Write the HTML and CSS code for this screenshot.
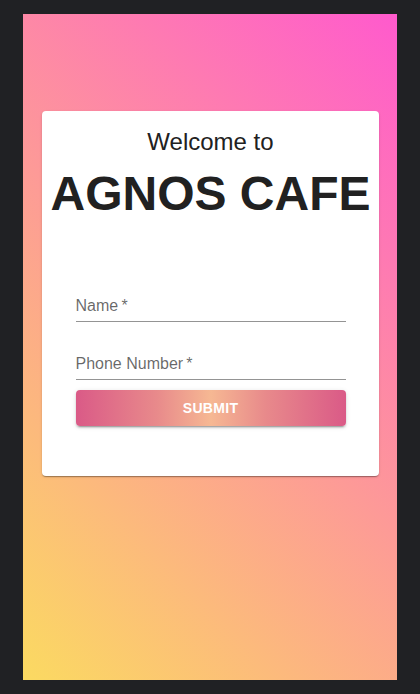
FILE: index.html
```html
<!DOCTYPE html>
<html lang="en">
<head>
<meta charset="utf-8">
<title>Agnos Cafe</title>
<link rel="stylesheet" href="styles.css">
</head>
<body>
  <div class="screen">
    <div class="card">
      <div class="welcome">Welcome to</div>
      <h1 class="brand">AGNOS CAFE</h1>
      <form class="form">
        <div class="field field-first">
          <span class="label">Name&#8201;*</span>
        </div>
        <div class="field">
          <span class="label">Phone Number&#8201;*</span>
        </div>
        <button type="button" class="submit">SUBMIT</button>
      </form>
    </div>
  </div>
</body>
</html>
```

FILE: styles.css
```css
html, body {
  margin: 0;
  padding: 0;
}
body {
  background: #202124;
  font-family: "Liberation Sans", Arial, sans-serif;
  padding-top: 14px;
  padding-bottom: 14px;
}
.screen {
  width: 374px;
  height: 666px;
  margin: 0 auto;
  box-sizing: border-box;
  padding-top: 97px;
  padding-left: 19px;
  background-color: #fbda61;
  background-image: linear-gradient(45deg, #fbda61 0%, #ff5acd 100%);
}
.card {
  width: 337px;
  height: 365px;
  box-sizing: border-box;
  background: #fff;
  border-radius: 4px;
  box-shadow: 0 2px 1px -1px rgba(0,0,0,0.2), 0 1px 1px 0 rgba(0,0,0,0.14), 0 1px 3px 0 rgba(0,0,0,0.12);
  padding-top: 17px;
  display: flex;
  flex-direction: column;
  align-items: center;
  color: #212121;
}
.welcome {
  font-size: 24px;
  line-height: 28px;
  text-align: center;
}
.brand {
  margin: 11px 0 0;
  font-size: 48px;
  line-height: 54px;
  font-weight: bold;
  text-align: center;
  white-space: nowrap;
}
.form {
  width: 270px;
  margin-top: 73px;
  display: flex;
  flex-direction: column;
}
.field {
  padding-bottom: 3px;
  border-bottom: 1px solid rgba(0,0,0,0.42);
  margin-top: 30px;
}
.field-first {
  margin-top: 0;
}
.label {
  display: block;
  font-size: 16px;
  line-height: 24px;
  color: rgba(0,0,0,0.6);
}
.submit {
  margin-top: 10px;
  height: 36px;
  border: none;
  border-radius: 4px;
  background: linear-gradient(to right, #da5a87 0%, #e88a8b 30%, #f6b893 50%, #e88a8b 70%, #da5a87 100%);
  color: #fff;
  font-family: "Liberation Sans", Arial, sans-serif;
  font-size: 14px;
  font-weight: bold;
  letter-spacing: 0.3px;
  box-shadow: 0 3px 1px -2px rgba(0,0,0,0.2), 0 2px 2px 0 rgba(0,0,0,0.14), 0 1px 5px 0 rgba(0,0,0,0.12);
  cursor: pointer;
}
```
